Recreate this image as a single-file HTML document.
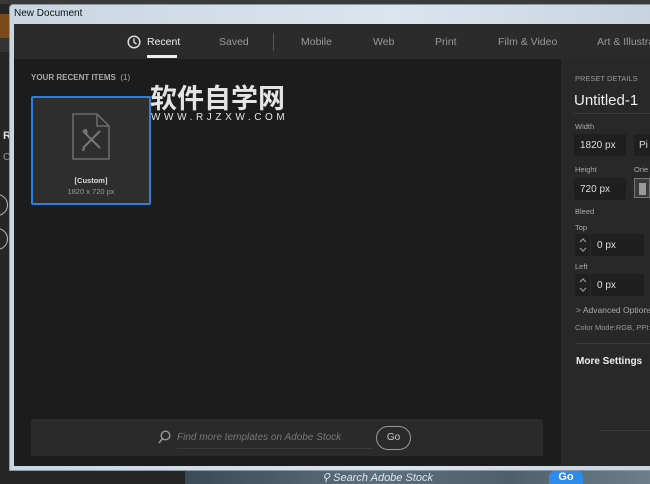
<!DOCTYPE html>
<html><head><meta charset="utf-8"><style>
*{margin:0;padding:0;box-sizing:border-box}
body{width:650px;height:484px;overflow:hidden;background:#262626;font-family:"Liberation Sans","Noto Sans CJK SC",sans-serif;position:relative}
.abs{position:absolute}
</style></head><body>
<div class="abs" style="left:0;top:0;width:650px;height:4px;background:#3a3a3a"></div>
<div class="abs" style="left:0;top:14px;width:10px;height:24px;background:#7a4a1a"></div>
<div class="abs" style="left:0;top:38px;width:10px;height:14px;background:#333"></div>
<div class="abs" style="left:3px;top:130px;color:#ddd;font-size:11px;font-weight:bold">R</div>
<div class="abs" style="left:3px;top:152px;color:#999;font-size:10px">C</div>
<div class="abs" style="left:-14px;top:194px;width:22px;height:22px;border:1px solid #bbb;border-radius:50%"></div>
<div class="abs" style="left:-14px;top:228px;width:22px;height:22px;border:1px solid #bbb;border-radius:50%"></div>
<!-- bottom strip -->
<div class="abs" style="left:185px;top:470px;width:465px;height:14px;background:linear-gradient(90deg,#3a4a56,#5d6f7c 40%,#4e606c 70%,#6c7e8a)"></div>
<div class="abs" style="left:322px;top:471px;color:#dfe6ec;font-size:11px;font-style:italic">&#9906; Search Adobe Stock</div>
<div class="abs" style="left:549px;top:471px;width:34px;height:13px;background:#2d8ceb;border-radius:6px 6px 0 0;color:#fff;font-size:11px;font-weight:bold;text-align:center;line-height:13px">Go</div>
<!-- window frame -->
<div class="abs" style="left:9px;top:4px;width:645px;height:467px;background:linear-gradient(90deg,#c9d5e1,#dbe5ee 60%,#c7d3df);border:1px solid #8a98a6;border-radius:4px 4px 0 0"></div>
<div class="abs" style="left:14px;top:8px;font-size:10px;color:#111">New Document</div>
<div class="abs" style="left:14px;top:24px;width:636px;height:442px;background:#1c1c1c"></div>
<!-- tabs -->
<div class="abs" style="left:14px;top:24px;width:636px;height:35px;background:#2b2b2b"></div>
<svg class="abs" style="left:127px;top:35px" width="14" height="14" viewBox="0 0 14 14"><circle cx="7" cy="7" r="5.8" fill="none" stroke="#ddd" stroke-width="1.5"/><path d="M7 3.5V7.3L9.5 9" fill="none" stroke="#ddd" stroke-width="1.4"/></svg>
<div class="abs" style="left:147px;top:36px;font-size:10.5px;color:#eee">Recent</div>
<div class="abs" style="left:147px;top:55px;width:30px;height:3px;background:#eee"></div>
<div class="abs" style="left:219px;top:36px;font-size:10.5px;color:#999">Saved</div>
<div class="abs" style="left:273px;top:33px;width:1px;height:18px;background:#555"></div>
<div class="abs" style="left:301px;top:36px;font-size:10.5px;color:#999">Mobile</div>
<div class="abs" style="left:373px;top:36px;font-size:10.5px;color:#999">Web</div>
<div class="abs" style="left:435px;top:36px;font-size:10.5px;color:#999">Print</div>
<div class="abs" style="left:498px;top:36px;font-size:10.5px;color:#999;white-space:nowrap">Film &amp; Video</div>
<div class="abs" style="left:597px;top:36px;font-size:10.5px;color:#999;white-space:nowrap">Art &amp; Illustration</div>
<!-- recent -->
<div class="abs" style="left:31px;top:73px;font-size:8px;color:#aaa;font-weight:bold">YOUR RECENT ITEMS &nbsp;<span style="font-weight:normal">(1)</span></div>
<div class="abs" style="left:31px;top:96px;width:120px;height:109px;background:#2e2e2e;border:2px solid #2d7fe0;border-radius:2px"></div>
<svg class="abs" style="left:72px;top:113px" width="38" height="47" viewBox="0 0 38 47"><path d="M1 1H25L37 13V46H1Z" fill="none" stroke="#777" stroke-width="1.3"/><path d="M25 1V13H37" fill="none" stroke="#777" stroke-width="1.3"/><path d="M11 18L28 35M28 18L11 35M11 18l3-1 1 3M10 37l3-1" fill="none" stroke="#777" stroke-width="2"/></svg>
<div class="abs" style="left:31px;top:176px;width:120px;text-align:center;font-size:7.5px;color:#ddd;font-weight:bold">[Custom]</div>
<div class="abs" style="left:31px;top:187px;width:120px;text-align:center;font-size:7.5px;color:#999">1820 x 720 px</div>
<div class="abs" style="left:150px;top:82px;font-size:27px;font-weight:bold;color:#e4e4e4;letter-spacing:0px;font-family:'Noto Sans CJK SC',sans-serif;line-height:30px">软件自学网</div>
<div class="abs" style="left:151px;top:112px;font-size:10px;color:#e4e4e4;letter-spacing:3.6px">WWW.RJZXW.COM</div>
<!-- bottom search -->
<div class="abs" style="left:31px;top:419px;width:512px;height:37px;background:#2a2a2a;border-radius:2px"></div>
<svg class="abs" style="left:158px;top:430px" width="13" height="14" viewBox="0 0 13 14"><circle cx="7.5" cy="5.5" r="4.3" fill="none" stroke="#999" stroke-width="1.4"/><path d="M4.5 8.5L1 13" stroke="#999" stroke-width="1.6"/></svg>
<div class="abs" style="left:177px;top:432px;font-size:10px;color:#777;font-style:italic">Find more templates on Adobe Stock</div>
<div class="abs" style="left:177px;top:448px;width:196px;height:1px;background:#3a3a3a"></div>
<div class="abs" style="left:376px;top:426px;width:35px;height:24px;border:1.5px solid #999;border-radius:12px;color:#ccc;font-size:10px;text-align:center;line-height:21px">Go</div>
<!-- right panel -->
<div class="abs" style="left:561px;top:59px;width:89px;height:407px;background:#282828"></div>
<div class="abs" style="left:575px;top:74px;font-size:7.5px;color:#999">PRESET DETAILS</div>
<div class="abs" style="left:574px;top:92px;font-size:15px;color:#eee">Untitled-1</div>
<div class="abs" style="left:574px;top:113px;width:76px;height:1px;background:#3a3a3a"></div>
<div class="abs" style="left:575px;top:122px;font-size:7.5px;color:#aaa">Width</div>
<div class="abs" style="left:574px;top:134px;width:52px;height:22px;background:#1f1f1f;border-radius:2px;color:#ddd;font-size:10px;padding:6px 6px">1820 px</div>
<div class="abs" style="left:634px;top:134px;width:20px;height:22px;background:#1f1f1f;color:#ddd;font-size:10px;padding:6px 5px">Pi</div>
<div class="abs" style="left:575px;top:165px;font-size:7.5px;color:#aaa">Height</div>
<div class="abs" style="left:634px;top:165px;font-size:7.5px;color:#aaa">Orie</div>
<div class="abs" style="left:574px;top:178px;width:52px;height:22px;background:#1f1f1f;border-radius:2px;color:#ddd;font-size:10px;padding:6px 6px">720 px</div>
<div class="abs" style="left:634px;top:178px;width:16px;height:20px;border:1px solid #777;background:#3a3a3a"><div style="margin:4px 0 0 4px;width:7px;height:12px;background:#999"></div></div>
<div class="abs" style="left:575px;top:207px;font-size:7.5px;color:#aaa">Bleed</div>
<div class="abs" style="left:575px;top:223px;font-size:7.5px;color:#aaa">Top</div>
<div class="abs" style="left:575px;top:234px;width:69px;height:22px;background:#1f1f1f;border-radius:2px"></div>
<svg class="abs" style="left:578px;top:237px" width="10" height="16" viewBox="0 0 10 16"><path d="M2 5L5 2L8 5M2 11L5 14L8 11" fill="none" stroke="#999" stroke-width="1.2"/></svg>
<div class="abs" style="left:590px;top:234px;width:1px;height:22px;background:#2a2a2a"></div>
<div class="abs" style="left:597px;top:240px;font-size:10px;color:#ddd">0 px</div>
<div class="abs" style="left:575px;top:262px;font-size:7.5px;color:#aaa">Left</div>
<div class="abs" style="left:575px;top:274px;width:69px;height:22px;background:#1f1f1f;border-radius:2px"></div>
<svg class="abs" style="left:578px;top:277px" width="10" height="16" viewBox="0 0 10 16"><path d="M2 5L5 2L8 5M2 11L5 14L8 11" fill="none" stroke="#999" stroke-width="1.2"/></svg>
<div class="abs" style="left:590px;top:274px;width:1px;height:22px;background:#2a2a2a"></div>
<div class="abs" style="left:597px;top:280px;font-size:10px;color:#ddd">0 px</div>
<div class="abs" style="left:576px;top:305px;font-size:8.5px;color:#aaa;white-space:nowrap">&gt; Advanced Options</div>
<div class="abs" style="left:575px;top:323px;font-size:7.5px;color:#999;white-space:nowrap">Color Mode:RGB, PPI:</div>
<div class="abs" style="left:575px;top:343px;width:75px;height:1px;background:#3a3a3a"></div>
<div class="abs" style="left:576px;top:356px;font-size:10px;color:#eee;font-weight:bold">More Settings</div>
<div class="abs" style="left:600px;top:430px;width:50px;height:1px;background:#3a3a3a"></div>
</body></html>
